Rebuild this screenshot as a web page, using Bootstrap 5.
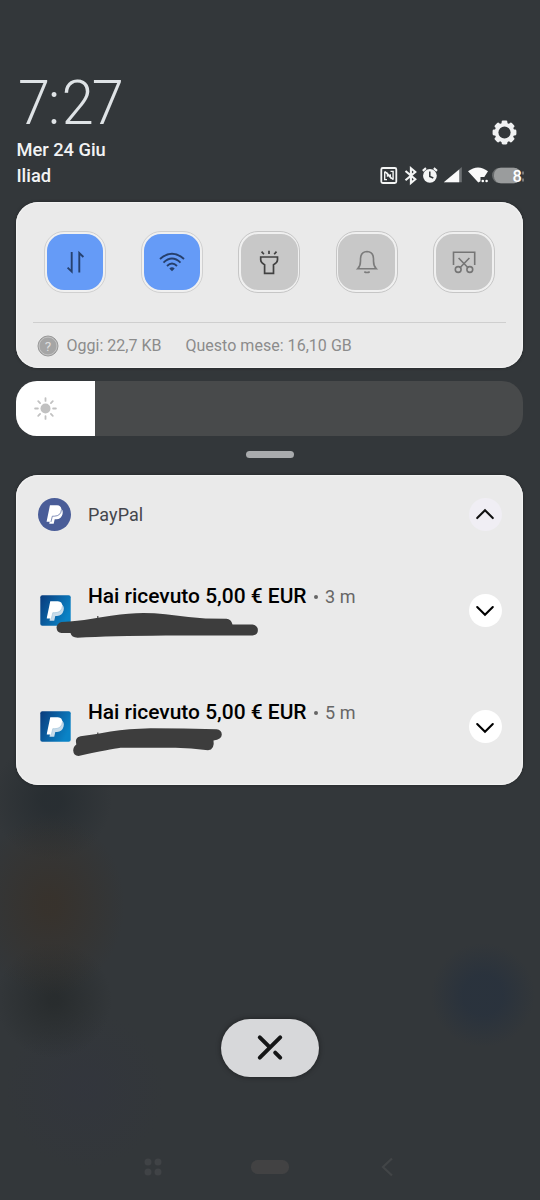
<!DOCTYPE html>
<html lang="it">
<head>
<meta charset="utf-8">
<meta name="viewport" content="width=device-width, initial-scale=1">
<title>Notifiche</title>
<link rel="stylesheet" href="https://cdn.jsdelivr.net/npm/bootstrap@5.3.0/dist/css/bootstrap.min.css">
<style>
body{font-family:Roboto,"Noto Sans",sans-serif;background:#33373a;color:#fff;}
.shade{width:540px;height:1200px;padding:0 16.6px 0 16.4px;overflow:hidden;
 background:
 radial-gradient(ellipse 75px 90px at 50px 905px,rgba(58,47,36,.6) 10%,transparent),
 radial-gradient(circle at 54px 1000px,rgba(38,42,43,.8) 5px,transparent 58px),
 radial-gradient(circle at 52px 800px,rgba(38,44,48,.8) 10px,transparent 60px),
 radial-gradient(circle at 483px 995px,rgba(41,50,61,.9) 20px,transparent 52px),
 radial-gradient(circle at 85px 1090px,rgba(50,53,62,.6) 5px,transparent 80px),
 #33373a;}
.top{height:202px;padding-top:70px;}
.clock{font-size:62px;line-height:66px;font-weight:300;color:#dfe3e6;height:67px;width:108px;margin-left:2px;letter-spacing:-2.2px;transform:scaleX(.93);transform-origin:0 0}
.clock span{margin-right:4px}
.day{font-size:18.3px;line-height:26px;font-weight:500;color:#f2f3f4;white-space:nowrap}
.gear{margin-top:50px;margin-right:6.5px}
.status{margin-right:-2px;margin-top:17px}
.panel{background:#eaeaea;border-radius:22px;box-shadow:0 0 3px rgba(20,22,24,.55),inset 0 0 1px 1px #f3f3f3;color:#000}
.quick{height:166px;padding-top:29px}
.tiles{padding:0 28.5px 0 27.5px}
.tile{width:62px;height:62px;border:1.3px solid #c6c6c6;border-radius:20px;background:#f0f0f0;padding:1.7px}
.tile>span{border-radius:17px;background:#c8c8c8}
.tile.on{border-color:#d0d0d0}
.tile.on>span{background:#659bf7}
.usage{margin:29px 17px 0 17px;border-top:1px solid #cfcfcf;padding:11.5px 0 0 3.2px;font-size:16px;line-height:22px;color:#8c8c8c;white-space:nowrap}
.month{letter-spacing:.03px}
.bright{height:55px;margin-top:13px;border-radius:21px;background:#484a4b;overflow:hidden}
.bright>div{width:78.5px;background:#fff;padding-left:17px}
.grip{width:48px;height:7px;margin:15px auto 0;border-radius:4px;background:#a9abad}
.notes{height:310px;margin-top:17.4px;padding-top:1px}
.heading{height:76.5px;padding:0 21.6px 0 22px}
.note{height:116.5px;padding:0 22.6px 0 23.2px}
.note .msg{padding-top:31px;line-height:24px;margin-left:17.3px}
.note .logo{margin-top:42px;--back:#c9dcea;--seam:#a9c9de}
.note .knob{margin-top:41px;margin-right:-1px}
.app{font-size:18px;color:#45464c;margin-left:16.5px;letter-spacing:.1px}
.title{font-size:20.95px;font-weight:500;letter-spacing:0;white-space:nowrap}
.when{font-size:18px;color:#666;white-space:nowrap;margin-left:7px}
.when i{display:inline-block;width:4px;height:4px;border-radius:50%;background:#666;vertical-align:4px;margin-right:7.5px}
.knob{width:33px;height:33px;background:#fff}
.knob.open{background:#f0eef4}
.scrib{left:34.6px;top:-.5px;pointer-events:none}
.dismiss{width:98px;height:58px;border-radius:29px;background:#d7d8da;margin:233.6px auto 0;box-shadow:0 0 5px rgba(15,15,15,.6)}
.keys{margin-top:77.5px;height:26px;padding:0 122.5px 0 126.5px}
</style>
</head>
<body>
<svg width="0" height="0" class="d-none">
 <symbol id="pp" viewBox="0 0 50 56">
  <path d="M17 9H42Q51 15 48 27Q44 42 30 42H25L22 55H9Z" fill="var(--back)"/>
  <path d="M11 1H32Q46 2 44 16Q41 32 24 32H18L14 49H1Z" fill="#fff"/>
  <path d="M45 13Q44 32 24 33H18L14 50" fill="none" stroke="var(--seam)" stroke-width="2"/>
 </symbol>
</svg>
<main class="shade d-flex flex-column">
 <header class="top d-flex justify-content-between flex-shrink-0">
  <div>
   <div class="clock text-nowrap">7<span>:</span>27</div>
   <div class="day">Mer 24 Giu</div>
   <div class="day">Iliad</div>
  </div>
  <div class="d-flex flex-column align-items-end">
   <svg class="gear" width="25" height="25" viewBox="0 0 25 25"><g fill="#f0f1f2"><rect x="9.6" y=".6" width="5.8" height="23.8" rx="1.4"/><rect x="9.6" y=".6" width="5.8" height="23.8" rx="1.4" transform="rotate(45 12.5 12.5)"/><rect x="9.6" y=".6" width="5.8" height="23.8" rx="1.4" transform="rotate(90 12.5 12.5)"/><rect x="9.6" y=".6" width="5.8" height="23.8" rx="1.4" transform="rotate(135 12.5 12.5)"/><circle cx="12.5" cy="12.5" r="9.8"/></g><circle cx="12.5" cy="12.5" r="6.1" fill="#33373a"/></svg>
   <svg class="status" width="146" height="26" viewBox="379 162 146 26">
    <g fill="none" stroke="#f4f5f5">
     <rect x="381.3" y="168" width="15" height="15" rx="1.5" stroke-width="1.8"/>
     <path d="M387 179.6H384.7V171.4M384.9 171.4L390.3 177.5V174.3M390.5 171.4H393.1V179.7M392.9 179.6L387.5 173.5V176.8" stroke-width="1.4"/>
     <path d="M405.5 171L415.3 179.3L410.9 183V168.3L415.3 172L405.5 180.3" stroke-width="2.1"/>
     <path d="M422.8 170.8L426 168.2M437 170.8L433.8 168.2" stroke-width="2.2"/>
    </g>
    <circle cx="429.9" cy="175.8" r="6.9" fill="#f4f5f5"/><path d="M429.8 171.5V176.4L433.3 178" fill="none" stroke="#33373a" stroke-width="1.5"/>
    <path d="M461.8 167V182.3H443.8Z" fill="#6d7073"/><path d="M459.2 169.5V182.3H443.8Z" fill="#fafafa"/>
    <path d="M468 171.3Q478 163.5 488 171.3L484.3 177H480.5V181.3L478.3 182.5Z" fill="#fafafa"/><circle cx="482.8" cy="181" r="1.3" fill="#fff"/><circle cx="486.6" cy="181" r="1.3" fill="#fff"/>
    <rect x="492" y="167.7" width="29" height="15.6" rx="7.8" fill="#66696b"/><rect x="494" y="167.7" width="27" height="15.6" rx="7" fill="#9a9c9d"/>
    <rect x="520" y="166" width="5" height="19" fill="#33373a"/>
    <text x="512.6" y="181.6" font-size="16.5" font-weight="500" fill="#fff">8</text>
    <path d="M523 171.5v3M523 178.5v3" stroke="#aaa" stroke-width="1.2"/>
   </svg>
  </div>
 </header>

 <section class="panel quick flex-shrink-0">
  <div class="tiles d-flex justify-content-between">
   <div class="tile on"><span class="d-flex w-100 h-100 align-items-center justify-content-center">
    <svg width="26" height="26" viewBox="0 0 26 26" fill="none" stroke="#26416f" stroke-width="1.9"><path d="M9.7 3V22.6L5.6 18.6M17.3 23.5V4L21.4 8"/></svg></span></div>
   <div class="tile on"><span class="d-flex w-100 h-100 align-items-center justify-content-center">
    <svg width="28" height="26" viewBox="0 0 28 26" fill="none" stroke="#263f6b" stroke-width="1.9"><path d="M2 10Q14-.7 26 10M5.5 13.6Q14 5.5 22.5 13.6M9 17Q14 12 19 17"/><path d="M11.3 19.5Q14 16.8 16.7 19.5L14 22.3Z" fill="#263f6b" stroke="none"/></svg></span></div>
   <div class="tile"><span class="d-flex w-100 h-100 align-items-center justify-content-center">
    <svg width="26" height="26" viewBox="0 0 26 26" fill="none" stroke="#414141" stroke-width="1.7"><path d="M4.7 8H21.5V11Q21.3 14 17.5 15.7V24.3H8.6V15.7Q4.9 14 4.7 11ZM13 1.7V5M5.6 2.6L7.9 5.2M20.5 2.6L18.2 5.2"/></svg></span></div>
   <div class="tile"><span class="d-flex w-100 h-100 align-items-center justify-content-center">
    <svg width="26" height="26" viewBox="0 0 26 26" fill="none" stroke="#7b7b7b" stroke-width="1.6"><path d="M3.7 19.8Q6.5 17 6.5 12V9.7Q6.8 2.7 13 2.5Q19.3 2.7 19.5 9.7V12Q19.5 17 22.3 19.8ZM10.3 22.7Q13 24.2 15.7 22.7"/></svg></span></div>
   <div class="tile"><span class="d-flex w-100 h-100 align-items-center justify-content-center">
    <svg width="26" height="26" viewBox="0 0 26 26" fill="none" stroke="#757575" stroke-width="1.6"><path d="M2.5 16V3.3H23.7V16M7.6 9L17.3 19M18.4 9L8.7 19"/><circle cx="7.2" cy="20.5" r="2.9"/><circle cx="18.8" cy="20.5" r="2.9"/></svg></span></div>
  </div>
  <div class="usage d-flex">
   <svg width="22" height="22" viewBox="0 .6 22 22" class="flex-shrink-0"><circle cx="11" cy="11.6" r="10" fill="#a5a5a5" stroke="#999" stroke-width="1"/><circle cx="11" cy="11.6" r="8.9" fill="none" stroke="#c9c9c9" stroke-width=".8"/><text x="11" y="16.3" text-anchor="middle" font-size="13.5" fill="#dedede">?</text></svg>
   <span class="ms-2 today">Oggi: 22,7 KB</span><span class="ms-4 month">Questo mese: 16,10 GB</span>
  </div>
 </section>

 <div class="bright flex-shrink-0"><div class="h-100 d-flex align-items-center">
  <svg width="25" height="25" viewBox="-12.5 -12.5 25 25"><circle r="5" fill="#c1c1c1"/><path d="M0-10.4V-7.6M0 10.4V7.6M-10.4 0H-7.6M10.4 0H7.6M-7.3-7.3L-5.4-5.4M7.3-7.3L5.4-5.4M-7.3 7.3L-5.4 5.4M7.3 7.3L5.4 5.4" stroke="#c1c1c1" stroke-width="1.8" stroke-linecap="round"/></svg>
 </div></div>
 <div class="grip flex-shrink-0"></div>

 <section class="panel notes flex-shrink-0">
  <div class="heading d-flex align-items-center">
   <svg width="33" height="33" viewBox="0 0 33 33" style="--back:#fff;--seam:#4a5d98"><circle cx="16.5" cy="16.5" r="16.5" fill="#4a5d98"/><use href="#pp" x="8" y="7" width="17.4" height="19"/></svg>
   <span class="app">PayPal</span>
   <span class="knob open rounded-circle ms-auto d-flex align-items-center justify-content-center"><svg width="20" height="14" viewBox="0 0 20 14"><path d="M2.2 10.1L10 2.3L17.8 10.1" fill="none" stroke="#111" stroke-width="2.1" stroke-linecap="round"/></svg></span>
  </div>
  <article class="note position-relative d-flex">
   <svg class="logo flex-shrink-0" width="31" height="31" viewBox="0 0 31 31"><defs><linearGradient id="bl" x1="0" x2="1" y1="0" y2=".5"><stop offset="0" stop-color="#0a3b7c"/><stop offset="1" stop-color="#0a83c6"/></linearGradient></defs><rect x=".3" y=".3" width="30.4" height="30.4" rx="2" fill="url(#bl)"/><use href="#pp" x="6.3" y="5.7" width="18" height="20.5"/></svg>
   <div class="msg d-flex align-items-baseline"><span class="title">Hai ricevuto 5,00 € EUR</span><span class="when"><i></i>3 m</span></div>
   <span class="knob rounded-circle ms-auto d-flex align-items-center justify-content-center"><svg width="20" height="14" viewBox="0 0 20 14"><path d="M2.2 4L10 11.8L17.8 4" fill="none" stroke="#000" stroke-width="2.1" stroke-linecap="round"/></svg></span>
   <svg class="scrib position-absolute" width="220" height="110" viewBox="50.5 552.5 220 110"><path d="M97.3 616.5V620" stroke="#444" stroke-width="1.2"/><path d="M61 622.5Q78 621.5 90 619.5Q112 615.5 128 614.2Q146 612.8 165 614.8Q185 617.5 205 619L226 619.3Q230.5 619.5 232 625H252Q257.4 626 257.4 630.5Q257.4 635.5 252 636H165Q110 636.5 77 638.2Q71 638 70 633.5H61Q56.3 633 56 628Q56.5 623.5 61 622.5Z" fill="#3d3d3d"/></svg>
  </article>
  <article class="note position-relative d-flex">
   <svg class="logo flex-shrink-0" width="31" height="31" viewBox="0 0 31 31"><rect x=".3" y=".3" width="30.4" height="30.4" rx="2" fill="url(#bl)"/><use href="#pp" x="6.3" y="5.7" width="18" height="20.5"/></svg>
   <div class="msg d-flex align-items-baseline"><span class="title">Hai ricevuto 5,00 € EUR</span><span class="when"><i></i>5 m</span></div>
   <span class="knob rounded-circle ms-auto d-flex align-items-center justify-content-center"><svg width="20" height="14" viewBox="0 0 20 14"><path d="M2.2 4L10 11.8L17.8 4" fill="none" stroke="#000" stroke-width="2.1" stroke-linecap="round"/></svg></span>
   <svg class="scrib position-absolute" width="220" height="110" viewBox="50.5 669 220 110"><path d="M97.3 732.5V736" stroke="#444" stroke-width="1.2"/><path d="M80 736.3Q95 734.5 110 731.5Q128 728.8 150 728.3Q183 728.3 216 729.3Q221.3 730 221.3 734.7Q221 739.5 213 740.5Q214.5 749.5 207.5 750.3Q190 748 175 747.8H120Q110 749 78 756Q73 755.5 72.7 750.5Q72.8 746.5 75.8 744.5Q73.8 737.5 80 736.3Z" fill="#3d3d3d"/></svg>
  </article>
 </section>

 <div class="dismiss d-flex align-items-center justify-content-center flex-shrink-0">
  <svg width="30" height="30" viewBox="0 0 30 30" fill="none" stroke="#151617" stroke-width="4" stroke-linecap="round"><path d="M25.2 4.3L4.8 24.7M4.8 4.3L14.4 13.9M20.2 19.7L25.2 24.7"/></svg>
 </div>
 <footer class="keys d-flex justify-content-between align-items-center flex-shrink-0">
  <svg width="20" height="20" viewBox="0 0 20 20" fill="#404346"><circle cx="5" cy="5" r="3.5"/><circle cx="15" cy="5" r="3.5"/><circle cx="5" cy="15" r="3.5"/><circle cx="15" cy="15" r="3.5"/></svg>
  <svg width="38" height="14" viewBox="0 0 38 14" style="margin-left:7px"><rect width="38" height="14" rx="6.5" fill="#424243"/></svg>
  <svg width="30" height="20" viewBox="0 0 30 20"><path d="M21 1.5L12 10L21 18.5" fill="none" stroke="#424547" stroke-width="2.2"/></svg>
 </footer>
</main>
<script src="https://cdn.jsdelivr.net/npm/bootstrap@5.3.0/dist/js/bootstrap.bundle.min.js"></script>
</body>
</html>
